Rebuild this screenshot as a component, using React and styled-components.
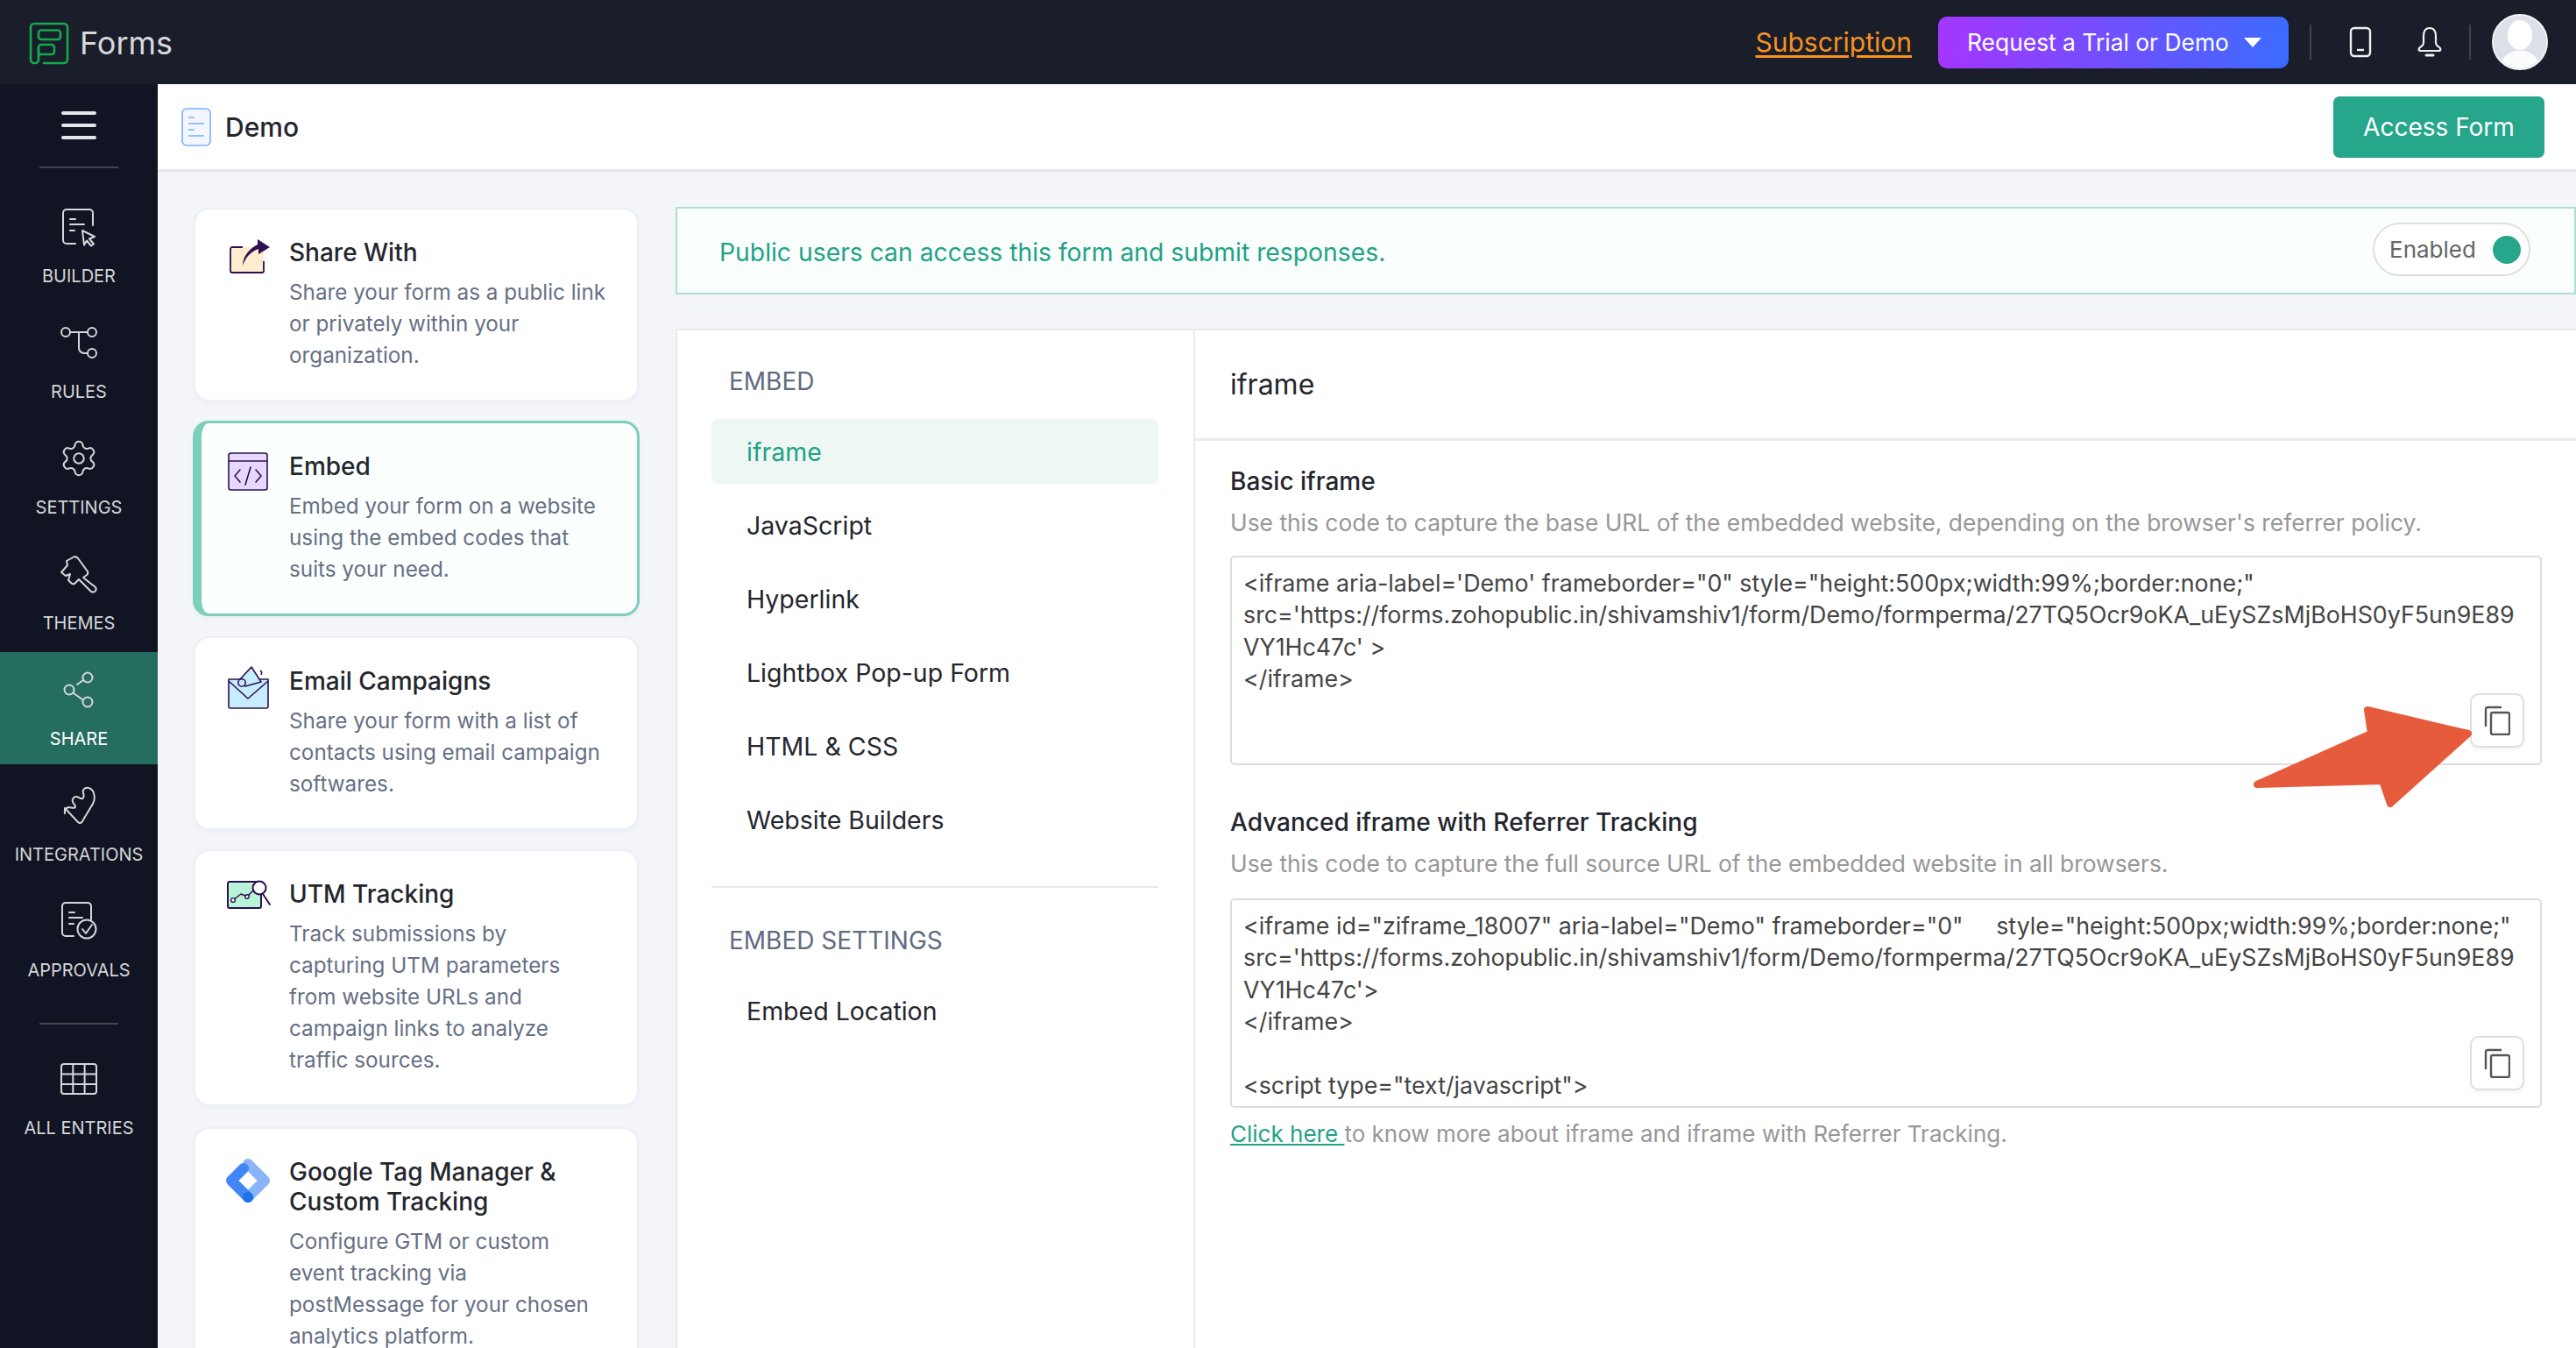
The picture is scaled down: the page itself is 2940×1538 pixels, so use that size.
import React from "react";
import styled, { createGlobalStyle } from "styled-components";
import { Settings } from "lucide-react";

const Global = createGlobalStyle`
  html, body { margin: 0; padding: 0; height: 100%; overflow: hidden; background: #f3f5f9; }
  body { font-family: Inter, "Noto Sans", "Liberation Sans", sans-serif; }
  * { box-sizing: border-box; }
`;

const Page = styled.div`width: 2940px; height: 1538px; overflow: hidden; display: flex; flex-direction: column; position: relative;`;

const TopBar = styled.header`height: 96px; flex: none; background: #1a1e2a; display: flex; align-items: center; padding: 0 32px 0 30px;`;
const LogoWrap = styled.div`display: flex; align-items: center; gap: 9px; flex: 1;`;
const LogoText = styled.span`font-size: 36px; color: #d8d9dc; line-height: 1; padding-top: 2px;`;
const SubLink = styled.a`font-size: 30px; color: #f7931e; text-decoration: underline; text-underline-offset: 4px; margin-right: 30px;`;
const TrialBtn = styled.button`width: 400px; height: 59px; border: 0; border-radius: 10px; background: linear-gradient(90deg, #a436ff, #3c6bff); color: #fff; font: 400 26.4px Inter, sans-serif; display: flex; align-items: center; padding: 0 31px 0 33px; justify-content: space-between;`;
const Caret = styled.span`width: 0; height: 0; border-left: 10px solid transparent; border-right: 10px solid transparent; border-top: 11px solid #fff;`;
const VLine = styled.span`width: 2px; height: 40px; background: #3e424e; flex: none;`;
const IconSlot = styled.span`display: flex; align-items: center; justify-content: center; margin: ${p => p.$m};`;
const Avatar = styled.div`width: 64px; height: 64px; border-radius: 50%; background: #dde0e8; border: 2px solid #f1f2f4; overflow: hidden; margin-left: 24px; flex: none;`;

const Body = styled.div`flex: 1; display: flex; min-height: 0;`;
const Side = styled.nav`width: 180px; flex: none; background: #111422; display: flex; flex-direction: column; align-items: stretch;`;
const Burger = styled.div`height: 94px; display: flex; flex-direction: column; align-items: center; gap: 10px; padding-top: 31px; flex: none;`;
const BurgerBar = styled.span`width: 40px; height: 4px; border-radius: 2px; background: #e4e5e8;`;
const SideRule = styled.div`width: 90px; height: 2px; background: #43464f; margin: ${p => p.$m}; align-self: center; flex: none;`;
const SideItem = styled.div`height: 128px; flex: none; margin-bottom: 4px; display: flex; flex-direction: column; align-items: center; padding-top: 19px; background: ${p => (p.$active ? "#256e5f" : "transparent")};`;
const SideIcon = styled.div`width: 48px; height: 48px; display: flex; align-items: center; justify-content: center; color: #d6d7da;`;
const SideLabel = styled.span`margin-top: 20px; font-size: 20px; line-height: 24px; color: ${p => (p.$active ? "#fff" : "#d4d5d8")}; white-space: nowrap;`;

const Main = styled.main`flex: 1; min-width: 0; display: flex; flex-direction: column;`;
const SubHead = styled.div`height: 100px; flex: none; background: #fff; border-bottom: 3px solid #e3e6ea; display: flex; align-items: center; padding: 0 36px 0 27px;`;
const DemoTitle = styled.h1`flex: 1; margin: 0 0 0 16px; font-size: 30px; font-weight: 500; color: #23262d;`;
const AccessBtn = styled.button`width: 241px; height: 70px; border: 0; border-radius: 7px; background: #26a68a; color: #fff; font: 400 28px Inter, sans-serif;`;

const Content = styled.div`flex: 1; min-height: 0; display: flex; padding: 41px 0 0 41px; gap: 42px;`;
const Cards = styled.div`width: 508px; flex: none; display: flex; flex-direction: column; gap: 22px;`;
const Card = styled.article`
  flex: none; display: flex; border-radius: 18px; background: ${p => (p.$on ? "#fbfffd" : "#fff")};
  border: ${p => (p.$on ? "3px solid #7ccfbb" : "2px solid #ecf0f6")};
  ${p => (p.$on ? "border-left-width: 10px; margin: 0 -1px 1px -1px; padding: 32px 32px 32px 28px;" : "padding: 32px 32px 32px 35px;")}
  ${p => (p.$tail ? "margin-bottom: 2px;" : "")}
  box-shadow: 0 2px 6px rgba(30, 50, 90, 0.03);
`;
const CardIcon = styled.div`width: 72px; flex: none; line-height: 0;`;
const CardText = styled.div`min-width: 0;`;
const CardTitle = styled.h3`margin: 0 0 11px; font-size: 28px; line-height: 34px; font-weight: 500; color: #23262d; white-space: nowrap;`;
const CardDesc = styled.p`margin: 0; font-size: 24.25px; line-height: 36px; color: #667085; white-space: nowrap;`;

const Right = styled.div`flex: 1; min-width: 0; margin-top: -1px; display: flex; flex-direction: column; gap: 39px;`;
const Banner = styled.div`height: 100px; flex: none; background: #fafefc; border: 2px solid #acdfd4; display: flex; align-items: center; justify-content: space-between; padding: 0 50px 0 48px;`;
const BannerText = styled.span`font-size: 28.3px; color: #1fa286; padding-top: 3px;`;
const Toggle = styled.div`width: 180px; height: 61px; margin-bottom: 3px; border: 2px solid #dedede; border-radius: 31px; background: #fff; display: flex; align-items: center; justify-content: space-between; padding: 0 9px 0 17px; font-size: 26px; color: #666;`;
const Dot = styled.span`width: 32px; height: 32px; border-radius: 50%; background: #26a68a;`;

const Panel = styled.section`flex: 1; min-height: 0; background: #fff; border: 2px solid #e8eaee; border-bottom: 0; border-right: 0; display: flex;`;
const LeftNav = styled.div`width: 591px; flex: none; border-right: 2px solid #e8eaee; padding: 0 40px 0 39px;`;
const NavHead = styled.div`font-size: 28px; line-height: 34px; color: #5f6b80; padding-left: 20px; margin: ${p => p.$m};`;
const NavItem = styled.div`height: 74px; border-radius: 7px; display: flex; align-items: center; padding-left: 40px; margin-left: -20px; margin-bottom: 10px; font-size: 28.5px; color: ${p => (p.$on ? "#1fa286" : "#23262d")}; background: ${p => (p.$on ? "#eef7f3" : "transparent")};`;
const NavList = styled.div`padding-left: 20px;`;
const NavRule = styled.div`height: 2px; background: #e6e8ec; margin-top: 39px;`;

const Detail = styled.div`flex: 1; min-width: 0;`;
const DetailHead = styled.div`height: 126px; border-bottom: 3px solid #e9ebee; padding: 43px 0 0 40px; font-size: 32px; line-height: 38px; color: #23262d;`;
const DetailBody = styled.div`padding: 29px 39px 0 40px;`;
const Section = styled.div`margin-bottom: 48px;`;
const SecTitle = styled.h4`margin: 0 0 12px; font-size: 28px; line-height: 34px; font-weight: 500; color: #23262d;`;
const SecDesc = styled.p`margin: 0 0 ${p => p.$mb || "20px"}; font-size: 26.4px; line-height: 36px; color: #979797; white-space: nowrap;`;
const CodeBox = styled.div`position: relative; height: 239px; border: 2px solid #dddddd; border-radius: 5px; padding: 11px 13px; overflow: hidden;`;
const Code = styled.pre`margin: 0; font: 400 26.8px/36.4px Inter, sans-serif; color: #444; white-space: pre;`;
const CopyBtn = styled.button`position: absolute; right: 18px; bottom: 18px; width: 62px; height: 62px; background: #fff; border: 2px solid #dfdfdf; border-radius: 10px; padding: 0; display: flex; align-items: center; justify-content: center; box-shadow: 0 2px 6px rgba(0,0,0,.05);`;
const Foot = styled.div`margin-top: -36px; font-size: 26px; line-height: 36px; color: #979797; white-space: nowrap;`;
const FootLink = styled.a`color: #1fa286; text-decoration: underline;`;
const ArrowOverlay = styled.svg`position: absolute; left: 2560px; top: 795px; pointer-events: none;`;

const S = { fill: "none", stroke: "currentColor", strokeWidth: 2, strokeLinecap: "round", strokeLinejoin: "round" };
const Ic = ({ children }) => <svg width="48" height="48" viewBox="0 0 48 48" {...S}>{children}</svg>;

const Builder = () => <Ic><path d="M40 22V8a4 4 0 0 0-4-4H10a4 4 0 0 0-4 4v31a4 4 0 0 0 4 4h10"/><path d="M14 15h6M14 21h16M14 28h5"/><path d="M28 28l14 7-6 2.5 5 6-3 2-5-6-3 5z"/></Ic>;
const Rules = () => <Ic><circle cx="9" cy="12" r="5"/><circle cx="39" cy="12" r="5"/><circle cx="39" cy="36" r="5"/><path d="M14 12h20M24 12v18a6 6 0 0 0 6 6h4"/></Ic>;
const Themes = () => <Ic><path d="M19 4c2 0 3 1 4 2l11 15c1 2 0 3-1 4l-4 3 14 11c2 3-1 7-5 5L24 30l-5 5c-2 1-3 0-4-1l-3-3 2-7-5 2-5-4 7-8-1-5z"/></Ic>;
const Share = () => <Ic><circle cx="34" cy="10" r="5.5"/><circle cx="13" cy="24" r="5.5"/><circle cx="34" cy="38" r="5.5"/><path d="M29 13l-7 5M18 28l10 7"/></Ic>;
const Integrations = () => <Ic><path d="M8 27l15 16c2 2 4 1 5-1l12-20c2-4 2-9 1-12-1-4-5-7-9-6-3 1-4 4-3 6s1 5-1 6c-2 1-4-2-7-2-3 0-5 3-4 6s4 4 3 6c-1 2-5 0-8 0-3 1-5 4-4 7z"/></Ic>;
const Approvals = () => <Ic><path d="M38 22V7a4 4 0 0 0-4-4H9a4 4 0 0 0-4 4v30a4 4 0 0 0 4 4h9"/><path d="M13 14h6M13 20h15M13 27h5"/><circle cx="33" cy="33" r="10.5"/><path d="M28 33l4 5 7-10"/></Ic>;
const Entries = () => <Ic><rect x="4" y="7" width="40" height="34" rx="3"/><path d="M4 18.5h40M4 30h40M17.3 7v34M30.6 7v34"/></Ic>;

const Logo = () => (
  <svg width="52" height="52" viewBox="0 0 52 52" fill="none" stroke="#14a94f" strokeWidth="2.6" strokeLinejoin="round" strokeLinecap="round">
    <path d="M20 50h23a4 4 0 0 0 4-4V9a4 4 0 0 0-4-4H9a4 4 0 0 0-4 4v37a4 4 0 0 0 4 4h1a4 4 0 0 0 4-4V32"/>
    <rect x="14" y="12.5" width="25" height="10.5" rx="3"/>
    <path d="M14 40V32a3 3 0 0 1 3-3h12a3 3 0 0 1 3 3v5a3 3 0 0 1-3 3H14"/>
  </svg>
);
const Phone = () => <svg width="26" height="36" viewBox="0 0 26 36" fill="none" stroke="#f0f0f0" strokeWidth="2.4"><rect x="2" y="2" width="22" height="32" rx="4"/><path d="M9 27h8"/></svg>;
const Bell = () => <svg width="32" height="36" viewBox="0 0 32 36" fill="none" stroke="#f0f0f0" strokeWidth="2.2" strokeLinejoin="round"><path d="M16 2c-5 0-7 4-7 9v8c0 3-3 4-5 6-1 2 0 3 2 3h20c2 0 3-1 2-3-2-2-5-3-5-6v-8c0-5-2-9-7-9z"/><path d="M12 33h8" strokeWidth="3" strokeLinecap="round"/></svg>;
const DocIcon = () => <svg width="34" height="44" viewBox="0 0 34 44" fill="none"><rect x="1" y="1" width="32" height="42" rx="5" fill="#f2f7ff" stroke="#7ab0ff" strokeWidth="1.6"/><path d="M8 11h7M8 18h18M8 25h7M8 32h18" stroke="#7ab0ff" strokeWidth="1.6"/></svg>;
const Person = () => <svg width="60" height="60" viewBox="0 0 60 60"><ellipse cx="30" cy="22" rx="14" ry="17" fill="#fff"/><path d="M8 60c0-14 10-18 16-20h12c6 2 16 6 16 20z" fill="#fff" opacity=".85"/></svg>;

const ShareWith = () => <svg width="52" height="44" viewBox="0 0 52 44" fill="none"><rect x="5" y="11" width="38" height="29" rx="2" fill="#ffeccf"/><path d="M19 11H7a2 2 0 0 0-2 2v25a2 2 0 0 0 2 2h34a2 2 0 0 0 2-2V27" stroke="#2c1052" strokeWidth="1.8"/><path d="M19 32C19 22 26 13 36 8V2l14 9-13 8v-6c-9 3-15 10-18 19z" fill="#2c1052"/></svg>;
const EmbedIc = () => <svg width="48" height="46" viewBox="0 0 48 46" fill="none" stroke="#2c1052" strokeWidth="1.6" strokeLinejoin="round"><rect x="3" y="2" width="44" height="42" rx="2.5" fill="#e7d8ff"/><path d="M3 11h44"/><path d="M16 21l-6 7 6 7M34 21l6 7-6 7M28 18l-6 20" strokeLinecap="round"/></svg>;
const MailIc = () => <svg width="50" height="50" viewBox="0 0 50 50" fill="none" stroke="#2c1052" strokeWidth="1.6" strokeLinejoin="round"><path d="M3 15h45v31a2 2 0 0 1-2 2H5a2 2 0 0 1-2-2z" fill="#c6edff"/><path d="M3 17l22 20 23-20"/><path d="M15 16L29 1l11 17-18 5z" fill="#c6edff"/><circle cx="18" cy="19" r="4.2" fill="#c6edff"/><path d="M39 5c2 1 2 3 1 5"/></svg>;
const UtmIc = () => <svg width="52" height="34" viewBox="0 0 52 34" fill="none" stroke="#2c1052" strokeLinejoin="round"><rect x="2" y="3" width="38" height="30" rx="2" fill="#b8f5d8" strokeWidth="2"/><path d="M8 24l9-7 7 3 6-6 7-5" strokeWidth="1.5"/><circle cx="8" cy="24" r="2.4" fill="#fff" strokeWidth="1.4"/><circle cx="24" cy="20" r="2.2" fill="#fff" strokeWidth="1.4"/><circle cx="38" cy="10" r="7.5" fill="#fff" strokeWidth="2"/><path d="M42 17l8 12" strokeWidth="2" strokeLinecap="round"/></svg>;
const GtmIc = () => <svg width="50" height="52" viewBox="0 0 50 52" fill="none" strokeWidth="12" strokeLinecap="round" strokeLinejoin="round" style={{ marginTop: 2 }}><path d="M25 6l19 19-19 19" stroke="#8ab4f8"/><path d="M20 11L6 25l19 19" stroke="#4285f4"/><circle cx="25" cy="44" r="6" fill="#1a73e8"/></svg>;
const CopyIc = () => <svg width="30" height="34" viewBox="0 0 30 34" fill="none" stroke="#555" strokeWidth="2.4"><path d="M2 24V4a2 2 0 0 1 2-2h16"/><rect x="8" y="8" width="21" height="25" rx="2"/></svg>;

const sideItems = [
  { l: "BUILDER", i: <Builder /> },
  { l: "RULES", i: <Rules /> },
  { l: "SETTINGS", i: <Settings size={46} strokeWidth={1.05} /> },
  { l: "THEMES", i: <Themes /> },
  { l: "SHARE", i: <Share />, active: true },
  { l: "INTEGRATIONS", i: <Integrations /> },
  { l: "APPROVALS", i: <Approvals /> },
];

const cards = [
  { t: ["Share With"], d: ["Share your form as a public link", "or privately within your", "organization."], i: <ShareWith /> },
  { t: ["Embed"], d: ["Embed your form on a website", "using the embed codes that", "suits your need."], i: <EmbedIc />, on: true },
  { t: ["Email Campaigns"], d: ["Share your form with a list of", "contacts using email campaign", "softwares."], i: <MailIc /> },
  { t: ["UTM Tracking"], d: ["Track submissions by", "capturing UTM parameters", "from website URLs and", "campaign links to analyze", "traffic sources."], i: <UtmIc />, tail: true },
  { t: ["Google Tag Manager &", "Custom Tracking"], d: ["Configure GTM or custom", "event tracking via", "postMessage for your chosen", "analytics platform."], i: <GtmIc /> },
];

const Lines = ({ a }) => a.map((x, k) => <React.Fragment key={k}>{k > 0 && <br />}{x}</React.Fragment>);

const code1 = `<iframe aria-label='Demo' frameborder="0" style="height:500px;width:99%;border:none;"
src='https://forms.zohopublic.in/shivamshiv1/form/Demo/formperma/27TQ5Ocr9oKA_uEySZsMjBoHS0yF5un9E89
VY1Hc47c' >
</iframe>`;
const code2 = `<iframe id="ziframe_18007" aria-label="Demo" frameborder="0"     style="height:500px;width:99%;border:none;"
src='https://forms.zohopublic.in/shivamshiv1/form/Demo/formperma/27TQ5Ocr9oKA_uEySZsMjBoHS0yF5un9E89
VY1Hc47c'>
</iframe>

<script type="text/javascript">
if(window.addEventListener) {`;

export default function App() {
  return (
    <Page>
      <Global />
      <TopBar>
        <LogoWrap><Logo /><LogoText>Forms</LogoText></LogoWrap>
        <SubLink>Subscription</SubLink>
        <TrialBtn>Request a Trial or Demo<Caret /></TrialBtn>
        <IconSlot $m="0 0 0 24px"><VLine /></IconSlot>
        <IconSlot $m="0 0 0 43px"><Phone /></IconSlot>
        <IconSlot $m="0 0 0 50px"><Bell /></IconSlot>
        <IconSlot $m="0 0 0 29px"><VLine /></IconSlot>
        <Avatar><Person /></Avatar>
      </TopBar>
      <Body>
        <Side>
          <Burger><BurgerBar /><BurgerBar /><BurgerBar /></Burger>
          <SideRule $m="0 0 24px" />
          {sideItems.map(s => (
            <SideItem key={s.l} $active={s.active}>
              <SideIcon>{s.i}</SideIcon>
              <SideLabel $active={s.active}>{s.l}</SideLabel>
            </SideItem>
          ))}
          <SideRule $m="27px 0 19px" />
          <SideItem>
            <SideIcon><Entries /></SideIcon>
            <SideLabel>ALL ENTRIES</SideLabel>
          </SideItem>
        </Side>
        <Main>
          <SubHead>
            <DocIcon />
            <DemoTitle>Demo</DemoTitle>
            <AccessBtn>Access Form</AccessBtn>
          </SubHead>
          <Content>
            <Cards>
              {cards.map(c => (
                <Card key={c.t[0]} $on={c.on} $tail={c.tail}>
                  <CardIcon>{c.i}</CardIcon>
                  <CardText>
                    <CardTitle><Lines a={c.t} /></CardTitle>
                    <CardDesc><Lines a={c.d} /></CardDesc>
                  </CardText>
                </Card>
              ))}
            </Cards>
            <Right>
              <Banner>
                <BannerText>Public users can access this form and submit responses.</BannerText>
                <Toggle>Enabled<Dot /></Toggle>
              </Banner>
              <Panel>
                <LeftNav>
                  <NavHead $m="41px 0 26px">EMBED</NavHead>
                  <NavList>
                    {["iframe", "JavaScript", "Hyperlink", "Lightbox Pop-up Form", "HTML & CSS", "Website Builders"].map((n, i) => (
                      <NavItem key={n} $on={i === 0}>{n}</NavItem>
                    ))}
                  </NavList>
                  <NavRule />
                  <NavHead $m="43px 0 26px">EMBED SETTINGS</NavHead>
                  <NavList><NavItem>Embed Location</NavItem></NavList>
                </LeftNav>
                <Detail>
                  <DetailHead>iframe</DetailHead>
                  <DetailBody>
                    <Section>
                      <SecTitle>Basic iframe</SecTitle>
                      <SecDesc>Use this code to capture the base URL of the embedded website, depending on the browser's referrer policy.</SecDesc>
                      <CodeBox><Code>{code1}</Code><CopyBtn><CopyIc /></CopyBtn></CodeBox>
                    </Section>
                    <Section>
                      <SecTitle>Advanced iframe with Referrer Tracking</SecTitle>
                      <SecDesc $mb="22px">Use this code to capture the full source URL of the embedded website in all browsers.</SecDesc>
                      <CodeBox><Code>{code2}</Code><CopyBtn><CopyIc /></CopyBtn></CodeBox>
                    </Section>
                    <Foot><FootLink>Click here </FootLink>to know more about iframe and iframe with Referrer Tracking.</Foot>
                  </DetailBody>
                </Detail>
              </Panel>
            </Right>
          </Content>
        </Main>
      </Body>
      <ArrowOverlay width="270" height="135" viewBox="0 0 270 135">
        <path d="M16 100L146 42 142 15 257 42 168 122 159 96z" fill="#e55b3c" stroke="#e55b3c" strokeWidth="8" strokeLinejoin="round"/>
      </ArrowOverlay>
    </Page>
  );
}
